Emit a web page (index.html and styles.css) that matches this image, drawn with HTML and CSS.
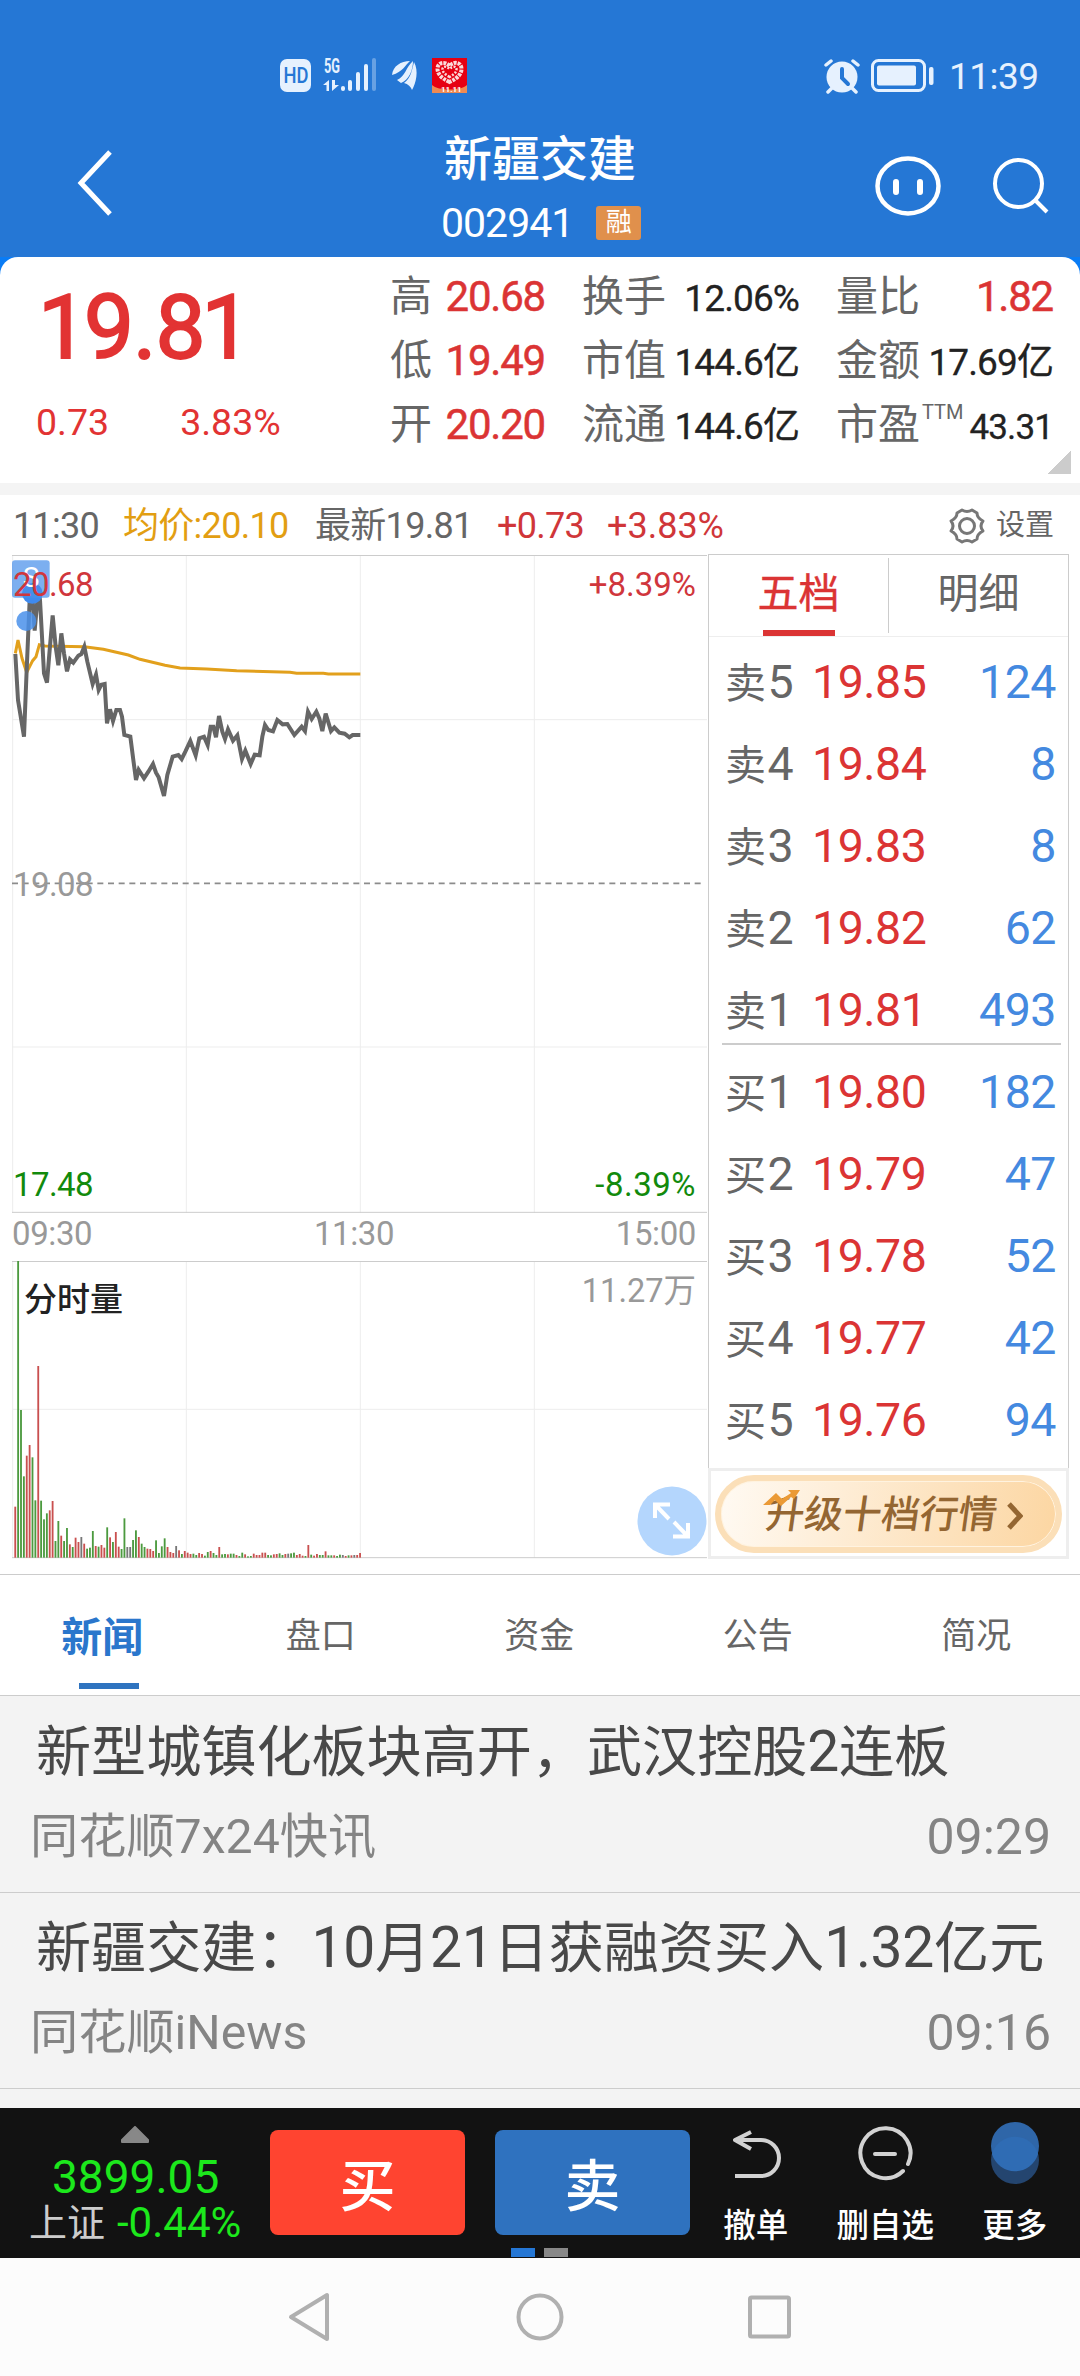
FILE: index.html
```html
<!DOCTYPE html>
<html lang="zh-CN">
<head>
    <meta charset="UTF-8">
    <meta name="viewport" content="width=device-width, initial-scale=1.0">
    <title>新疆交建 002941</title>
    <link rel="stylesheet" href="styles.css">
</head>
<body>

<!-- Status bar -->
<div class="status-bar">
    <svg class="status-left" width="190" height="40" viewBox="0 0 190 40" fill="#e6f1fe">
        <rect x="0" y="4" width="31" height="33" rx="7"/>
        <text x="3.500" y="28" class="svg-hd" textLength="25" lengthAdjust="spacingAndGlyphs">HD</text>
        <text x="44" y="18" class="svg-5g" textLength="16" lengthAdjust="spacingAndGlyphs">5G</text>
        <path d="M43 30l6-5v11h-2.500v-6zM52 25v11l7-6h-4v-5z"/>
        <rect x="61" y="31" width="4" height="5" rx="2"/>
        <rect x="68" y="25" width="4" height="11" rx="2"/>
        <rect x="76" y="17" width="4" height="19" rx="2"/>
        <rect x="84" y="9" width="4" height="27" rx="2"/>
        <rect x="92" y="3" width="4" height="33" rx="2" opacity=".35"/>
        <path d="M112 20c1-9 9-14 18-14-5 4-7 11-18 14zM117 25c8-3 9-13 16-19 0 9-4 19-12 22zM124 28c7-5 8-13 10-21 5 9 2 21-2 28-1-3-4-6-8-7z"/>
        <rect x="152" y="3" width="35" height="35" fill="#e60012"/>
        <path d="M152 38v-8c6 6 29 6 35 0v8z" fill="#ef8a52"/>
        <path d="M169.500 27c-9-4-12-9-12-13 0-7 8-8 12-3 4-5 12-4 12 3 0 4-3 9-12 13z" fill="none" stroke="#fbdada" stroke-width="4" stroke-dasharray="3 1"/>
        <path d="M169.500 22c-5-3-7-5-7-8 0-3 4-3 7 0 3-3 7-3 7 0 0 3-2 5-7 8z" fill="none" stroke="#fbdada" stroke-width="2.500" stroke-dasharray="2 1.500"/>
        <text x="161" y="37" class="svg-1111">11.11</text>
    </svg>
    <div class="status-right">
        <svg width="38" height="36" viewBox="0 0 38 36">
            <circle cx="19" cy="18" r="15.500" fill="#e6f1fe"/>
            <path d="M3 6l5-4M35 6l-5-4M5 33l4-4M33 33l-4-4" stroke="#e6f1fe" stroke-width="3.500" stroke-linecap="round"/>
            <path d="M19 10v9l6 6" fill="none" stroke="#2577d5" stroke-width="4" stroke-linecap="round"/>
        </svg>
        <svg width="64" height="34" viewBox="0 0 64 34">
            <rect x="1.500" y="1.500" width="52" height="30" rx="6" fill="none" stroke="#e6f1fe" stroke-width="3"/>
            <rect x="6" y="6.500" width="39" height="20" rx="2" fill="#e6f1fe"/>
            <rect x="58" y="8" width="4.500" height="18" rx="2" fill="#e6f1fe"/>
        </svg>
        <span class="clock">11:39</span>
    </div>
</div>

<!-- Title bar -->
<header class="title-bar">
    <svg class="back" width="40" height="68" viewBox="0 0 40 68">
        <path d="M35 3L6 34l29 31" fill="none" stroke="#fff" stroke-width="5"/>
    </svg>
    <div class="stock">
        <h1>新疆交建</h1>
        <div class="code"><span>002941</span><i>融</i></div>
    </div>
    <svg class="face" width="66" height="62" viewBox="0 0 66 62" fill="none" stroke="#fff">
        <ellipse cx="33" cy="31" rx="30.500" ry="27.500" stroke-width="4.500"/>
        <path d="M21 27v10M45 27v10" stroke-width="6" stroke-linecap="round"/>
    </svg>
    <svg class="search" width="58" height="58" viewBox="0 0 58 58" fill="none" stroke="#fff" stroke-width="4">
        <circle cx="26.500" cy="26.500" r="23.500"/>
        <path d="M43 43l12 12"/>
    </svg>
</header>

<!-- Quote -->
<div class="quote-wrap">
    <section class="quote">
        <div class="last">
            <div class="last-price">19<span>.</span>81</div>
            <div class="last-change"><span>0.73</span><span>3.83%</span></div>
        </div>
        <div class="stats">
            <div><label>高</label><b class="red">20.68</b></div>
            <div><label>换手</label><b>12.06%</b></div>
            <div><label>量比</label><b class="red">1.82</b></div>
            <div><label>低</label><b class="red">19.49</b></div>
            <div><label>市值</label><b>144.6亿</b></div>
            <div><label>金额</label><b>17.69亿</b></div>
            <div><label>开</label><b class="red">20.20</b></div>
            <div><label>流通</label><b>144.6亿</b></div>
            <div><label>市盈<sup>TTM</sup></label><b class="small">43.31</b></div>
        </div>
        <span class="corner"></span>
    </section>
</div>

<div class="info-row">
    <span class="i-time">11:30</span>
    <span class="i-avg">均价:20.10</span>
    <span class="i-new">最新19.81</span>
    <span class="i-chg">+0.73</span>
    <span class="i-pct">+3.83%</span>
    <span class="settings">
        <svg width="38" height="38" viewBox="0 0 38 38" fill="none" stroke="#777" stroke-width="3">
            <path d="M14 3Q19 6 24 3L29 6Q29 11 35 14Q31 19 35 24Q29 27 29 32L24 35Q19 32 14 35L9 32Q9 27 3 24Q7 19 3 14Q9 11 9 6Z" stroke-linejoin="round"/>
            <circle cx="19" cy="19" r="7.500"/>
        </svg>
        设置
    </span>
</div>

<!-- Chart and order book -->
<main class="board">
    <div class="charts">
        <div class="price-chart">
            <svg width="695" height="658" viewBox="36 45 2085 1974" fill="none">
                <path d="M38 45V2019M559 45V2019M1081 45V2019M1603 45V2019M36 539H2121M36 1521H2121" stroke="#ededed" stroke-width="3"/>
                <path d="M36 46.500H2121M36 2017H2121" stroke="#ccc" stroke-width="3"/>
                <path d="M36 1030H2112" stroke="#8c8c8c" stroke-width="5" stroke-dasharray="18 14"/>
                <polyline stroke="#e2a01c" stroke-width="9" points="46,340 54,300 66,355 80,397 98,362 108,350 118,314 135,318 253,320 310,328 385,345 420,358 495,376 540,384 620,387 710,392 870,397 890,400 970,400 985,402 1081,402"/>
                <polyline stroke="#666" stroke-width="12" points="46,342 54,480 72,590 80,390 89,180 98,180 104,272 115,150 120,180 132,400 141,428 149,330 158,226 167,320 175,376 184,280 192,340 201,394 210,358 220,368 235,347 244,342 253,320 262,365 278,432 288,404 296,450 304,434 314,432 321,550 330,508 339,543 349,510 360,510 366,530 373,585 391,590 400,660 408,720 416,690 432,715 445,695 459,672 468,698 476,712 492,768 502,705 518,650 535,645 545,657 556,635 571,603 587,646 598,595 612,590 623,615 632,560 640,560 648,592 657,528 667,575 675,597 684,568 699,602 712,586 726,657 736,632 752,672 764,644 779,646 787,590 795,555 805,570 819,574 832,540 848,553 862,552 883,585 905,560 915,573 924,515 935,537 949,515 958,535 967,573 977,521 993,573 1003,562 1018,578 1034,581 1048,592 1058,585 1081,585"/>
                <circle cx="97" cy="160" r="31" fill="#3f8aee"/>
                <rect x="36" y="61" width="113" height="112" rx="9" fill="#4a90ea" fill-opacity=".72"/>
                <text x="93" y="140" class="mark-s">S</text>
                <circle cx="79" cy="243" r="30" fill="#4a90ea" fill-opacity=".85"/>
            </svg>
            <span class="lbl lbl-high">20.68</span>
            <span class="lbl lbl-high-pct">+8.39%</span>
            <span class="lbl lbl-mid">19.08</span>
            <span class="lbl lbl-low">17.48</span>
            <span class="lbl lbl-low-pct">-8.39%</span>
        </div>
        <div class="times"><span>09:30</span><span>11:30</span><span>15:00</span></div>
        <div class="volume-chart">
            <svg width="695" height="298" viewBox="36 243 2085 894">
                <path d="M38 243V1134M559 243V1134M1081 243V1134M1603 243V1134M36 688H2121" stroke="#ededed" stroke-width="3"/>
                <path d="M36 244.500H2121M36 1133H2121" stroke="#ccc" stroke-width="3"/>
                <g id="bars"></g>
            </svg>
            <span class="vol-title">分时量</span>
            <span class="vol-max">11.27万</span>
            <svg class="expand" width="70" height="70" viewBox="0 0 70 70">
                <circle cx="35" cy="35" r="34.500" fill="#b4d6fd"/>
                <path d="M18 32V18.500H33M18.500 19L32 33M51 37V50.500H36M50.500 50L37 36" fill="none" stroke="#fff" stroke-width="4"/>
            </svg>
        </div>
    </div>

    <aside class="book">
        <div class="book-tabs"><span class="on">五档</span><span>明细</span></div>
        <ul class="sell">
            <li><label>卖<s>5</s></label><b>19.85</b><em>124</em></li>
            <li><label>卖<s>4</s></label><b>19.84</b><em>8</em></li>
            <li><label>卖<s>3</s></label><b>19.83</b><em>8</em></li>
            <li><label>卖<s>2</s></label><b>19.82</b><em>62</em></li>
            <li><label>卖<s>1</s></label><b>19.81</b><em>493</em></li>
        </ul>
        <ul>
            <li><label>买<s>1</s></label><b>19.80</b><em>182</em></li>
            <li><label>买<s>2</s></label><b>19.79</b><em>47</em></li>
            <li><label>买<s>3</s></label><b>19.78</b><em>52</em></li>
            <li><label>买<s>4</s></label><b>19.77</b><em>42</em></li>
            <li><label>买<s>5</s></label><b>19.76</b><em>94</em></li>
        </ul>
        <div class="upgrade">
            <a class="pill">
                <span>升级十档行情</span>
                <svg class="chevron" width="16" height="28" viewBox="0 0 16 28"><path d="M2 2l11 12L2 26" fill="none" stroke="#946632" stroke-width="5"/></svg>
                <svg class="trend" width="37" height="17" viewBox="0 0 37 17"><path d="M0 15L13 3l6 6 9-6-3-3h12l-6 9-3-2-10 9-6-6-5 5z" fill="#eb9a35"/></svg>
            </a>
        </div>
    </aside>
</main>

<!-- News -->
<nav class="tabs">
    <a class="on">新闻</a><a>盘口</a><a>资金</a><a>公告</a><a>简况</a>
</nav>
<section class="news">
    <article>
        <h2>新型城镇化板块高开，武汉控股<span>2</span>连板</h2>
        <p><span>同花顺7x24快讯</span><time>09:29</time></p>
    </article>
    <article>
        <h2>新疆交建：<span>10</span>月<span>21</span>日获融资买入<span>1.32</span>亿元</h2>
        <p><span>同花顺iNews</span><time>09:16</time></p>
    </article>
</section>

<!-- Trade bar -->
<footer class="trade-bar">
    <div class="index">
        <svg width="30" height="17" viewBox="0 0 30 17"><path d="M15 1L28 14v2H2v-2z" fill="#888" stroke="#888" stroke-width="2" stroke-linejoin="round"/></svg>
        <div class="index-value">3899.05</div>
        <div class="index-change">上证 <span>-0.44%</span></div>
    </div>
    <button class="buy">买</button>
    <button class="sell-btn">卖</button>
    <div class="action">
        <svg width="60" height="64" viewBox="0 0 60 64" fill="none" stroke="#d2d2d2" stroke-width="4">
            <path d="M9 55H35a17.500 17.500 0 0 0 0-36H9M25 11L9 19l16 9" stroke-linejoin="round"/>
        </svg>
        <span>撤单</span>
    </div>
    <div class="action">
        <svg width="60" height="64" viewBox="0 0 60 64" fill="none" stroke="#d2d2d2" stroke-width="4" stroke-linecap="round">
            <path d="M48 50A25 25 0 1 1 53 43M20 33H40"/>
        </svg>
        <span>删自选</span>
    </div>
    <div class="action">
        <svg width="60" height="64" viewBox="0 0 60 64">
            <circle cx="30" cy="39" r="24" fill="#24456f"/>
            <circle cx="30" cy="25" r="24" fill="#2f66a8"/>
            <path d="M7 33a24 24 0 0 1 46 0 24 24 0 0 1-46 0z" fill="#2f6cb4"/>
        </svg>
        <span>更多</span>
    </div>
    <div class="pager"><i></i><i></i></div>
</footer>

<div class="sys-nav">
    <svg width="46" height="52" viewBox="0 0 46 52"><path d="M41 4V48L5 26z"/></svg>
    <svg width="48" height="52" viewBox="0 0 48 52"><circle cx="24" cy="26" r="21.500"/></svg>
    <svg width="44" height="52" viewBox="0 0 44 52"><rect x="2" y="6.500" width="39" height="39" rx="1.500"/></svg>
</div>

<script src="chart.js"></script>
</body>
</html>
```
FILE: styles.css
```css
* {
    box-sizing: border-box;
}
body {
    margin: 0;
    width: 1080px;
    height: 2376px;
    overflow: hidden;
    background: #fff;
    color: #666;
    font-family: Roboto, "Noto Sans CJK SC", sans-serif;
}
svg {
    display: block;
    flex: none;
}
h1, h2, p, ul {
    margin: 0;
    padding: 0;
}
b, i, em, s {
    font-style: normal;
    font-weight: 400;
    text-decoration: none;
}

/* status + title */
.status-bar {
    height: 110px;
    padding: 55px 42px 0 280px;
    display: flex;
    justify-content: space-between;
    background: #2577d5;
}
.status-right {
    display: flex;
    gap: 10px;
    padding-top: 4px;
    height: 40px;
}
.clock {
    width: 89px;
    margin-left: 4px;
    color: #e6f1fe;
    font-size: 37px;
    line-height: 36px;
    letter-spacing: -0.5px;
}
.svg-hd {
    font: 500 22px Roboto;
    fill: #2577d5;
}
.svg-5g {
    font: 700 20px Roboto;
}
.svg-1111 {
    font: 700 8px Roboto;
    fill: #fff;
}
.title-bar {
    height: 147px;
    display: grid;
    grid-template-columns: 441px 434px 110px 1fr;
    background: #2577d5;
    color: #fff;
}
.back {
    margin: 39px 0 0 75px;
}
.stock h1 {
    margin: 21px 0 0 3px;
    font-size: 48px;
    font-weight: 500;
    line-height: 58px;
}
.code {
    display: flex;
    align-items: center;
    margin-top: 10px;
    height: 48px;
    font-size: 41px;
    line-height: 48px;
    letter-spacing: -1px;
}
.code i {
    width: 45px;
    height: 34px;
    margin-left: 23px;
    border-radius: 3px;
    background: #e0904c;
    font-size: 26px;
    line-height: 32px;
    letter-spacing: 0;
    text-align: center;
}
.face {
    margin-top: 45px;
}
.search {
    margin-top: 47px;
    margin-left: 7px;
}

/* quote */
.quote-wrap {
    height: 238px;
    background: linear-gradient(#0a7cf5 50px, #f4f4f4 50px);
}
.quote {
    position: relative;
    display: flex;
    height: 226px;
    background: #fff;
    border-radius: 18px 18px 0 0;
}
.last {
    width: 390px;
    color: #e23333;
}
.last-price {
    margin: 17px 0 0 38px;
    font-size: 89px;
    line-height: 108px;
    letter-spacing: -4px;
    -webkit-text-stroke: 2px #e23333;
}
.last-price span {
    margin: 0 3px;
}
.last-change {
    display: flex;
    gap: 71px;
    margin: 17px 0 0 36px;
    font-size: 37.500px;
    line-height: 46px;
}
.stats {
    display: grid;
    grid-template-columns: 155px 217px 217px;
    grid-auto-rows: 64px;
    column-gap: 37px;
    padding-top: 8px;
}
.stats div {
    display: flex;
    justify-content: space-between;
    white-space: nowrap;
    font-size: 42px;
    line-height: 64px;
}
.stats b {
    color: #222;
    font-size: 37px;
    letter-spacing: -0.9px;
    padding-top: 2px;
    -webkit-text-stroke: 0.3px #222;
}
.stats b.red {
    color: #db3434;
    font-size: 42px;
    letter-spacing: -1.2px;
    padding: 0;
    -webkit-text-stroke: 0.5px #db3434;
}
.stats b.small {
    font-size: 35px;
    padding-top: 3px;
}
.stats sup {
    font-size: 20px;
    line-height: 20px;
    vertical-align: 20px;
    margin-left: 2px;
}
.corner {
    position: absolute;
    right: 9px;
    bottom: 9px;
    width: 24px;
    height: 24px;
    background: linear-gradient(135deg, transparent 50%, #ccc 50%);
}
.info-row {
    display: flex;
    height: 59px;
    padding: 0 26px 0 13px;
    font-size: 36px;
    line-height: 63px;
    letter-spacing: -0.7px;
    white-space: nowrap;
}
.i-time {
    width: 110px;
}
.i-avg {
    width: 192px;
    color: #e29e12;
}
.i-new {
    width: 182px;
}
.i-chg {
    width: 110px;
    color: #d03639;
}
.i-pct {
    color: #d03639;
    letter-spacing: 0;
}
.settings {
    display: flex;
    align-items: center;
    gap: 10px;
    margin-left: auto;
    padding-top: 2px;
    font-size: 29px;
    letter-spacing: 0;
}

/* charts */
.board {
    display: flex;
    height: 1021px;
    padding-left: 12px;
    border-bottom: 1px solid #ccc;
}
.charts {
    width: 695px;
    padding-top: 1px;
}
.price-chart, .volume-chart {
    position: relative;
}
.lbl {
    position: absolute;
    font-size: 33px;
    line-height: 36px;
    letter-spacing: -0.6px;
}
.lbl-high {
    left: 1px;
    top: 12px;
    color: #d0363c;
}
.lbl-high-pct {
    right: 11px;
    top: 12px;
    color: #d0363c;
    letter-spacing: 0;
}
.lbl-mid {
    left: 1px;
    top: 312px;
    color: #999;
}
.lbl-low {
    left: 1px;
    bottom: 10px;
    color: #128a0c;
}
.lbl-low-pct {
    right: 11px;
    bottom: 10px;
    color: #128a0c;
    letter-spacing: 0.5px;
}
.mark-s {
    font: 84px Roboto;
    fill: #fff;
    text-anchor: middle;
}
.times {
    display: flex;
    justify-content: space-between;
    height: 48px;
    padding: 0 11px 0 0;
    color: #999;
    font-size: 33px;
    line-height: 41px;
    letter-spacing: -0.4px;
}
.vol-title {
    position: absolute;
    left: 12px;
    top: 15px;
    color: #222;
    font-size: 33px;
    font-weight: 500;
    line-height: 48px;
}
.vol-max {
    position: absolute;
    right: 11px;
    top: 8px;
    color: #999;
    font-size: 32.500px;
    line-height: 44px;
}
.expand {
    position: absolute;
    left: 625px;
    top: 225px;
}

/* order book */
.book {
    width: 361px;
    height: 1004px;
    border: 1px solid #ccc;
    margin-left: 1px;
}
.book-tabs {
    display: flex;
    height: 82px;
    border-bottom: 1px solid #eee;
}
.book-tabs span {
    position: relative;
    flex: 1;
    text-align: center;
    font-size: 41px;
    line-height: 79px;
}
.book-tabs .on {
    color: #db3434;
    border-right: 1px solid #ccc;
    height: 75px;
    margin-top: 3px;
    line-height: 73px;
    -webkit-text-stroke: 0.4px #db3434;
}
.book-tabs .on::after {
    content: "";
    position: absolute;
    left: 54px;
    top: 72px;
    width: 72px;
    height: 6px;
    background: #db3434;
}
.book ul {
    position: relative;
    list-style: none;
}
.book .sell {
    margin-top: 3px;
}
.sell::after {
    content: "";
    position: absolute;
    left: 13px;
    bottom: 5px;
    width: 339px;
    height: 2px;
    background: #ccc;
}
.book li {
    display: flex;
    height: 82px;
    padding: 0 12px 0 16px;
    font-size: 46.500px;
    line-height: 84px;
    letter-spacing: -0.5px;
}
.book label {
    width: 87px;
    font-size: 41px;
}
.book s {
    margin-left: 2px;
    font-size: 46.500px;
}
.book b {
    color: #db3434;
}
.book em {
    margin-left: auto;
    color: #4489e0;
}
.upgrade {
    margin: 8px -1px 0;
    height: 91px;
    border: 3px solid #eee;
    padding: 4px 4px 3px;
}
.pill {
    position: relative;
    display: flex;
    align-items: center;
    height: 78px;
    padding-left: 45px;
    border: 6px solid #fbdfb8;
    border-radius: 39px;
    background: linear-gradient(100deg, #fffaf3, #fcd6a2);
    box-shadow: inset 0 0 0 1px #fff3e0;
    color: #946632;
    font-size: 38.500px;
}
.pill span {
    line-height: 50px;
    margin-top: 2px;
    transform: skewX(-8deg);
    font-weight: 500;
}
.chevron {
    margin: 3px 0 0 10px;
}
.trend {
    position: absolute;
    left: 42px;
    top: 9px;
}

/* news */
.tabs {
    display: flex;
    height: 121px;
    margin: 0 -7px;
    border-bottom: 1px solid #ccc;
}
.tabs a {
    position: relative;
    width: 218.500px;
    flex: none;
    text-align: center;
    font-size: 35px;
    line-height: 124px;
}
.tabs .on {
    color: #2a76cc;
    font-size: 41px;
    font-weight: 700;
    line-height: 126px;
}
.tabs .on::after {
    content: "";
    position: absolute;
    left: 86px;
    bottom: 6px;
    width: 60px;
    height: 6px;
    background: #2f74c0;
}
.news {
    height: 412px;
    padding-top: 1px;
    background: #f3f3f3;
}
.news article {
    height: 196px;
    padding: 15px 29px 0 30px;
    border-bottom: 1px solid #ccc;
}
.news h2 {
    padding-left: 6px;
    color: #484848;
    font-size: 55.100px;
    font-weight: 400;
    line-height: 80px;
    white-space: nowrap;
}
.news h2 span {
    font-size: 57px;
    letter-spacing: -0.3px;
}
.news p {
    display: flex;
    justify-content: space-between;
    color: #848484;
    font-size: 48.200px;
    line-height: 60px;
    margin-top: 15px;
}
.news time {
    font-size: 50px;
}

/* trade bar */
.trade-bar {
    position: relative;
    display: flex;
    height: 150px;
    background: #121212;
}
.index {
    width: 270px;
    white-space: nowrap;
    color: #1ce81c;
}
.index svg {
    margin: 18px 0 0 120px;
}
.index-value {
    margin: 14px 0 0 52px;
    font-size: 46px;
    line-height: 40px;
}
.index-change {
    display: flex;
    gap: 12px;
    margin: 5px 0 0 29px;
    font-size: 38px;
    line-height: 42px;
    color: #ccc;
}
.index-change span {
    font-size: 42px;
    color: #1ce81c;
}
.trade-bar button {
    width: 195px;
    height: 105px;
    margin: 22px 30px 0 0;
    padding: 0 0 2px;
    border: 0;
    border-radius: 8px;
    color: #fff;
    font-family: inherit;
    font-size: 56px;
    font-weight: 500;
}
.buy {
    background: #ff4430;
}
.trade-bar .sell-btn {
    margin-right: 1px;
    background: #2f72bf;
}
.action {
    width: 129.500px;
    flex: none;
    display: flex;
    flex-direction: column;
    align-items: center;
    padding-top: 13px;
    color: #fff;
    font-size: 32.500px;
    font-weight: 500;
    line-height: 48px;
}
.action span {
    margin-top: 17px;
}
.pager {
    position: absolute;
    left: 511px;
    bottom: 1px;
    display: flex;
    gap: 9px;
}
.pager i {
    width: 24px;
    height: 9px;
    background: #2577d5;
}
.pager i + i {
    background: #888;
}
.sys-nav {
    display: flex;
    height: 118px;
    padding: 33px 0 0 286px;
    background: #fcfcfc;
    fill: none;
    stroke: #b0b0b0;
    stroke-width: 4;
    stroke-linejoin: round;
}
.sys-nav svg + svg {
    margin-left: 184px;
}
```
FILE: chart.js
```js
// one entry per minute, r = up, g = down, k = flat
const volumes = 'r153 g890 g443 g244 r306 r338 g301 g172 r575 g171 g115 g133 r142 r170 g50 g110 r66 g50 g89 r40 ' +
    'g32 r60 r47 k62 r42 g27 g30 g80 r35 g33 r38 r30 g91 r61 g47 r77 r33 g26 g118 k32 ' +
    'k32 g53 g82 r62 g42 g32 r27 r26 r20 g52 g14 g34 g58 r32 r17 r14 k35 r22 g11 r20 ' +
    'r15 r11 g12 g8 r14 r11 g6 g17 r20 g14 g8 r32 g10 g11 r10 g12 g12 r8 g5 g15 ' +
    'r10 g4 g5 r12 r8 r8 r15 r15 g8 g7 r10 r11 g13 g8 r11 k12 g13 g15 r8 r11 ' +
    'r6 g5 r38 g9 r6 r11 g8 g8 r19 g7 g7 r7 g5 g9 k8 r5 g7 r7 k8 r8 r14';
const colors = { r: '#c9504f', g: '#4c9a3f', k: '#777' };

document.getElementById('bars').innerHTML = volumes.split(' ').map((v, i) => {
    const h = Number(v.slice(1));
    return `<rect x="${43 + i * 8.62}" y="${1133 - h}" width="5.5" height="${h}" fill="${colors[v[0]]}"/>`;
}).join('');
```
